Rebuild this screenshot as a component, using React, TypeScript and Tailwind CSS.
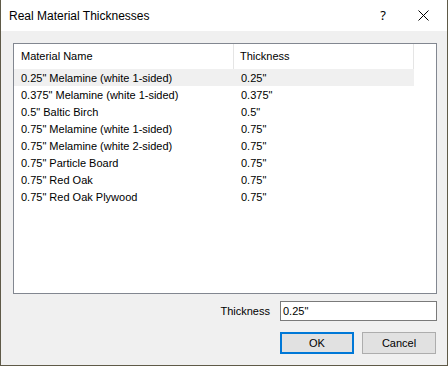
import React from "react";

const rows: [string, string][] = [
  ["0.25\" Melamine (white 1-sided)", "0.25\""],
  ["0.375\" Melamine (white 1-sided)", "0.375\""],
  ["0.5\" Baltic Birch", "0.5\""],
  ["0.75\" Melamine (white 1-sided)", "0.75\""],
  ["0.75\" Melamine (white 2-sided)", "0.75\""],
  ["0.75\" Particle Board", "0.75\""],
  ["0.75\" Red Oak", "0.75\""],
  ["0.75\" Red Oak Plywood", "0.75\""],
];

const App = () => {
  return (
    <div className="w-[448px] h-[366px] flex flex-col border-l border-r border-b border-[#5f5a48] bg-[#f0f0f0] font-['Liberation_Sans',Arial,sans-serif] text-[11px] text-black">
      {/* title bar */}
      <div className="h-[31px] bg-white flex items-center shrink-0">
        <span className="ml-[8px] text-[12px] text-black">
          Real Material Thicknesses
        </span>
        <span className="ml-auto mr-[32px] text-[13px] font-['Noto_Sans',sans-serif]">?</span>
        <svg width="11" height="11" viewBox="0 0 11 11" className="mr-[18px] shrink-0">
          <path d="M0.5 0.5 L10.5 10.5 M10.5 0.5 L0.5 10.5" stroke="#000" strokeWidth="1" />
        </svg>
      </div>

      <div className="flex-1 flex flex-col pl-[12px] pr-[10px] pt-[12px]">
        {/* list view */}
        <div className="h-[251px] border border-[#828790] bg-white">
          <div className="flex h-[25px] items-center">
            <div className="w-[220px] h-full flex items-center pl-[7px] border-r border-[#e5e5e5]">
              Material Name
            </div>
            <div className="w-[180px] h-full flex items-center pl-[6px] border-r border-[#e5e5e5]">
              Thickness
            </div>
          </div>
          {rows.map((r, i) => (
            <div
              key={i}
              className={
                "flex h-[17px] items-center pt-[1px] w-[400px] " + (i === 0 ? "bg-[#f0f0f0]" : "")
              }
            >
              <div className="w-[221px] pl-[7px]">{r[0]}</div>
              <div className="pl-[6px]">{r[1]}</div>
            </div>
          ))}
        </div>

        {/* thickness field */}
        <div className="flex items-center justify-end mt-[7px]">
          <span className="mr-[10px]">Thickness</span>
          <div className="w-[157px] h-[20px] border border-[#7a7a7a] bg-white flex items-center pl-[2px]">
            0.25"
          </div>
        </div>

        {/* buttons */}
        <div className="flex justify-end mt-[11px] gap-[8px] mr-[1px]">
          <button className="w-[74px] h-[22px] border-2 border-[#0078d7] bg-[#e1e1e1] text-[11px]">
            OK
          </button>
          <button className="w-[74px] h-[22px] border border-[#adadad] bg-[#e1e1e1] text-[11px]">
            Cancel
          </button>
        </div>
      </div>
    </div>
  );
};

export default App;
